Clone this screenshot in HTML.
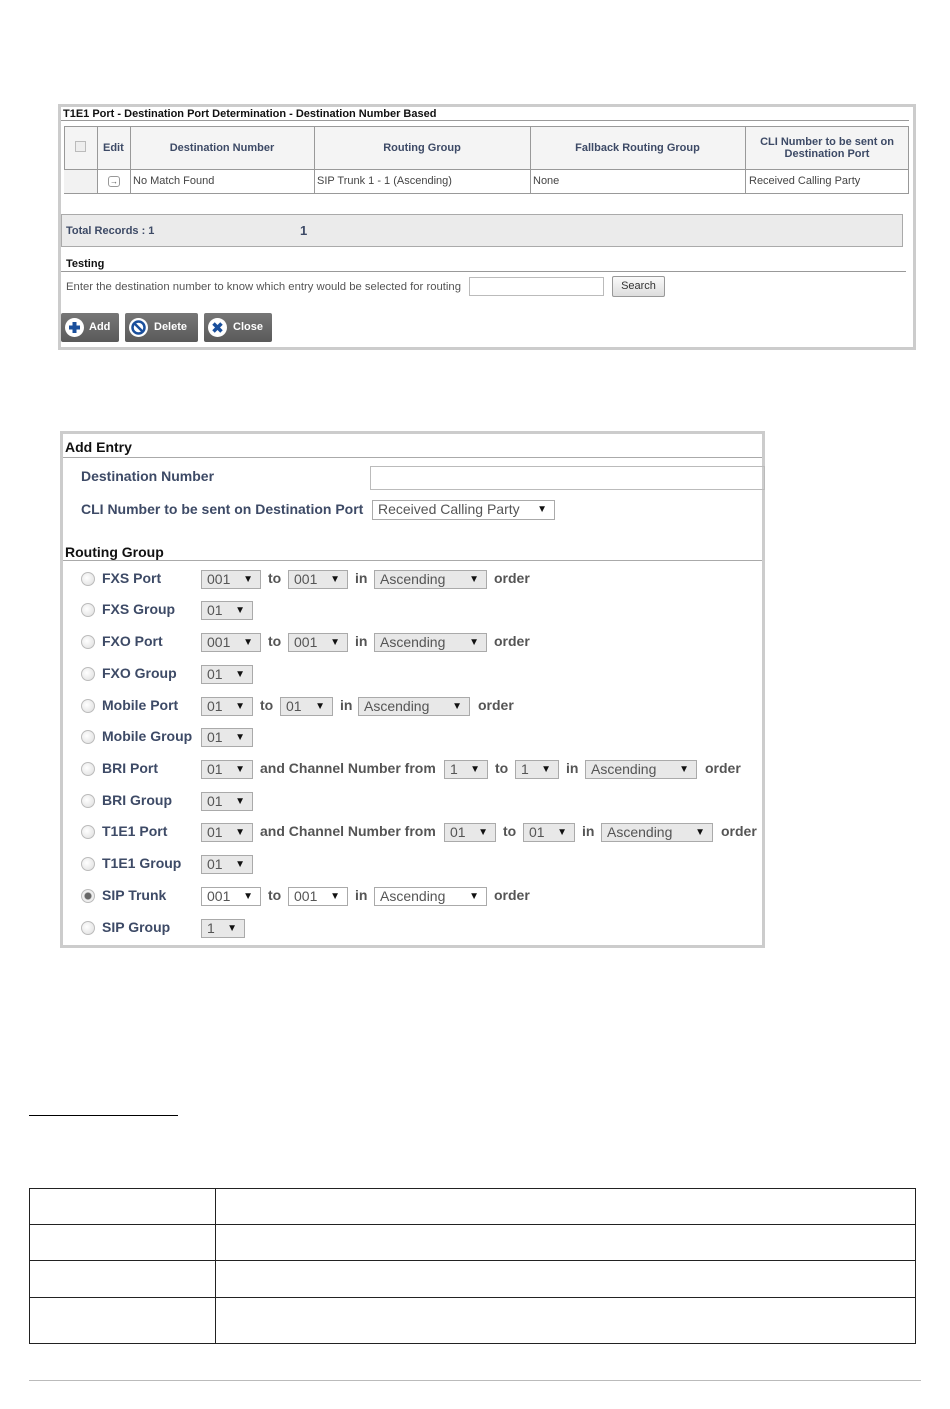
<!DOCTYPE html>
<html><head><meta charset="utf-8"><style>
*{margin:0;padding:0;box-sizing:border-box}
body{width:950px;height:1409px;background:#fff;position:relative;font-family:"Liberation Sans",Arial,sans-serif;overflow:hidden}
.a{position:absolute}
.t{position:absolute;white-space:nowrap}
.s{position:absolute;height:19px;border:1px solid #aaa;background:#e8e8e8;font-size:14px;color:#555;padding-left:5px;line-height:17px}
.s:after{content:"▼";position:absolute;right:7px;top:0;font-size:10px;color:#111}
.s.w{background:#fff}
.r{position:absolute;width:14px;height:14px;border-radius:50%;border:1px solid #bbb;background:radial-gradient(circle at 40% 40%,#fff,#ddd)}
.l{position:absolute;font-size:14px;color:#3d4a66;white-space:nowrap;font-weight:bold}
.k{position:absolute;font-size:14px;color:#555;white-space:nowrap;font-weight:bold}
.btn{position:absolute;top:313px;height:29px;background:linear-gradient(#777,#5a5a5a);color:#fff;font-size:11px;line-height:29px;border-radius:2px;font-weight:bold}
.ic{position:absolute;left:4px;top:5px;width:19px;height:19px;border-radius:50%;background:#fff}
.h{font-weight:bold}
</style></head><body>
<!-- panel 1 -->
<div class="a" style="left:58px;top:104px;width:858px;height:246px;border:3px solid #ccc"></div>
<div class="t h" style="left:63px;top:108px;font-size:11px;color:#111">T1E1 Port - Destination Port Determination - Destination Number Based</div>
<div class="a" style="left:61px;top:120px;width:848px;border-top:1px solid #999"></div>
<div class="a" style="left:64px;top:126px;width:845px;height:68px;border:1px solid #999;background:#fff"></div>
<div class="a" style="left:64px;top:126px;width:845px;height:44px;background:#f4f4f4;border:1px solid #999"></div>
<div class="a" style="left:64px;top:170px;width:33px;height:23px;background:#f2f2f2"></div>
<div class="a" style="left:97px;top:126px;height:68px;border-left:1px solid #999"></div>
<div class="a" style="left:130px;top:126px;height:68px;border-left:1px solid #999"></div>
<div class="a" style="left:314px;top:126px;height:68px;border-left:1px solid #999"></div>
<div class="a" style="left:530px;top:126px;height:68px;border-left:1px solid #999"></div>
<div class="a" style="left:745px;top:126px;height:68px;border-left:1px solid #999"></div>
<div class="a" style="left:75px;top:141px;width:11px;height:11px;border:1px solid #bbb;background:#eee"></div>
<div class="t h" style="left:103px;top:142px;font-size:11px;color:#3d4a66">Edit</div>
<div class="t h" style="left:130px;width:184px;text-align:center;top:142px;font-size:11px;color:#3d4a66">Destination Number</div>
<div class="t h" style="left:314px;width:216px;text-align:center;top:142px;font-size:11px;color:#3d4a66">Routing Group</div>
<div class="t h" style="left:530px;width:215px;text-align:center;top:142px;font-size:11px;color:#3d4a66">Fallback Routing Group</div>
<div class="t h" style="left:745px;width:164px;text-align:center;top:136px;font-size:11px;color:#3d4a66;line-height:12px;white-space:normal">CLI Number to be sent on Destination Port</div>
<div class="a" style="left:108px;top:176px;width:12px;height:11px;border:1px solid #999;border-radius:3px;font-size:8px;line-height:9px;text-align:center;color:#555">→</div>
<div class="t" style="left:133px;top:175px;font-size:11px;color:#444">No Match Found</div>
<div class="t" style="left:317px;top:175px;font-size:11px;color:#444">SIP Trunk 1 - 1 (Ascending)</div>
<div class="t" style="left:533px;top:175px;font-size:11px;color:#444">None</div>
<div class="t" style="left:749px;top:175px;font-size:11px;color:#444">Received Calling Party</div>
<div class="a" style="left:61px;top:214px;width:842px;height:33px;background:#ebebeb;border:1px solid #aaa"></div>
<div class="t h" style="left:66px;top:225px;font-size:11px;color:#3d4a66">Total Records : 1</div>
<div class="t h" style="left:300px;top:223px;font-size:13px;color:#3d4a66">1</div>
<div class="t h" style="left:66px;top:258px;font-size:11px;color:#111">Testing</div>
<div class="a" style="left:61px;top:271px;width:845px;border-top:1px solid #999"></div>
<div class="t" style="left:66px;top:281px;font-size:11.3px;color:#555">Enter the destination number to know which entry would be selected for routing</div>
<div class="a" style="left:469px;top:277px;width:135px;height:19px;border:1px solid #bbb"></div>
<div class="a" style="left:612px;top:276px;width:53px;height:21px;border:1px solid #999;background:linear-gradient(#fafafa,#ddd);font-size:11px;line-height:19px;text-align:center;color:#333;border-radius:2px">Search</div>
<div class="btn" style="left:61px;width:58px"><div class="ic"><svg width="19" height="19"><path d="M9.5 4v11M4 9.5h11" stroke="#1a4f9c" stroke-width="4"/></svg></div><span style="margin-left:28px">Add</span></div>
<div class="btn" style="left:125px;width:73px"><div class="ic"><svg width="19" height="19"><circle cx="9.5" cy="9.5" r="6" fill="none" stroke="#1a4f9c" stroke-width="2.5"/><path d="M5.5 5.5l8 8" stroke="#1a4f9c" stroke-width="2.5"/></svg></div><span style="margin-left:29px">Delete</span></div>
<div class="btn" style="left:204px;width:68px"><div class="ic"><svg width="19" height="19"><path d="M5.5 5.5l8 8M13.5 5.5l-8 8" stroke="#1a4f9c" stroke-width="3.5"/></svg></div><span style="margin-left:29px">Close</span></div>

<!-- panel 2 -->
<div class="a" style="left:60px;top:431px;width:705px;height:517px;border:3px solid #ccc"></div>
<div class="t h" style="left:65px;top:439px;font-size:14px;color:#111">Add Entry</div>
<div class="a" style="left:63px;top:457px;width:699px;border-top:1px solid #aaa"></div>
<div class="l" style="left:81px;top:468px">Destination Number</div>
<div class="a" style="left:370px;top:466px;width:395px;height:24px;border:1px solid #bbb"></div>
<div class="l" style="left:81px;top:501px">CLI Number to be sent on Destination Port</div>
<div class="s w" style="left:372px;top:500px;width:183px;height:20px">Received Calling Party</div>
<div class="t h" style="left:65px;top:544px;font-size:14px;color:#111">Routing Group</div>
<div class="a" style="left:63px;top:560px;width:699px;border-top:1px solid #aaa"></div>

<div class="r" style="left:81px;top:572px"></div><div class="l" style="left:102px;top:570px">FXS Port</div>
<div class="s" style="left:201px;top:570px;width:60px">001</div><div class="k" style="left:268px;top:570px">to</div>
<div class="s" style="left:288px;top:570px;width:60px">001</div><div class="k" style="left:355px;top:570px">in</div>
<div class="s" style="left:374px;top:570px;width:113px">Ascending</div><div class="k" style="left:494px;top:570px">order</div>

<div class="r" style="left:81px;top:603px"></div><div class="l" style="left:102px;top:601px">FXS Group</div>
<div class="s" style="left:201px;top:601px;width:52px">01</div>

<div class="r" style="left:81px;top:635px"></div><div class="l" style="left:102px;top:633px">FXO Port</div>
<div class="s" style="left:201px;top:633px;width:60px">001</div><div class="k" style="left:268px;top:633px">to</div>
<div class="s" style="left:288px;top:633px;width:60px">001</div><div class="k" style="left:355px;top:633px">in</div>
<div class="s" style="left:374px;top:633px;width:113px">Ascending</div><div class="k" style="left:494px;top:633px">order</div>

<div class="r" style="left:81px;top:667px"></div><div class="l" style="left:102px;top:665px">FXO Group</div>
<div class="s" style="left:201px;top:665px;width:52px">01</div>

<div class="r" style="left:81px;top:699px"></div><div class="l" style="left:102px;top:697px">Mobile Port</div>
<div class="s" style="left:201px;top:697px;width:52px">01</div><div class="k" style="left:260px;top:697px">to</div>
<div class="s" style="left:280px;top:697px;width:53px">01</div><div class="k" style="left:340px;top:697px">in</div>
<div class="s" style="left:358px;top:697px;width:112px">Ascending</div><div class="k" style="left:478px;top:697px">order</div>

<div class="r" style="left:81px;top:730px"></div><div class="l" style="left:102px;top:728px">Mobile Group</div>
<div class="s" style="left:201px;top:728px;width:52px">01</div>

<div class="r" style="left:81px;top:762px"></div><div class="l" style="left:102px;top:760px">BRI Port</div>
<div class="s" style="left:201px;top:760px;width:52px">01</div><div class="k" style="left:260px;top:760px">and Channel Number from</div>
<div class="s" style="left:444px;top:760px;width:44px">1</div><div class="k" style="left:495px;top:760px">to</div>
<div class="s" style="left:515px;top:760px;width:44px">1</div><div class="k" style="left:566px;top:760px">in</div>
<div class="s" style="left:585px;top:760px;width:112px">Ascending</div><div class="k" style="left:705px;top:760px">order</div>

<div class="r" style="left:81px;top:794px"></div><div class="l" style="left:102px;top:792px">BRI Group</div>
<div class="s" style="left:201px;top:792px;width:52px">01</div>

<div class="r" style="left:81px;top:825px"></div><div class="l" style="left:102px;top:823px">T1E1 Port</div>
<div class="s" style="left:201px;top:823px;width:52px">01</div><div class="k" style="left:260px;top:823px">and Channel Number from</div>
<div class="s" style="left:444px;top:823px;width:52px">01</div><div class="k" style="left:503px;top:823px">to</div>
<div class="s" style="left:523px;top:823px;width:52px">01</div><div class="k" style="left:582px;top:823px">in</div>
<div class="s" style="left:601px;top:823px;width:112px">Ascending</div><div class="k" style="left:721px;top:823px">order</div>

<div class="r" style="left:81px;top:857px"></div><div class="l" style="left:102px;top:855px">T1E1 Group</div>
<div class="s" style="left:201px;top:855px;width:52px">01</div>

<div class="r" style="left:81px;top:889px;background:radial-gradient(circle,#666 0 3px,#eee 4px)"></div><div class="l" style="left:102px;top:887px">SIP Trunk</div>
<div class="s w" style="left:201px;top:887px;width:60px">001</div><div class="k" style="left:268px;top:887px">to</div>
<div class="s w" style="left:288px;top:887px;width:60px">001</div><div class="k" style="left:355px;top:887px">in</div>
<div class="s w" style="left:374px;top:887px;width:113px">Ascending</div><div class="k" style="left:494px;top:887px">order</div>

<div class="r" style="left:81px;top:921px"></div><div class="l" style="left:102px;top:919px">SIP Group</div>
<div class="s" style="left:201px;top:919px;width:44px">1</div>

<!-- bottom -->
<div class="a" style="left:29px;top:1115px;width:149px;border-top:1px solid #000"></div>
<div class="a" style="left:29px;top:1188px;width:887px;height:156px;border:1px solid #222"></div>
<div class="a" style="left:29px;top:1224px;width:887px;border-top:1px solid #222"></div>
<div class="a" style="left:29px;top:1260px;width:887px;border-top:1px solid #222"></div>
<div class="a" style="left:29px;top:1297px;width:887px;border-top:1px solid #222"></div>
<div class="a" style="left:215px;top:1188px;height:156px;border-left:1px solid #222"></div>
<div class="a" style="left:29px;top:1380px;width:892px;border-top:1px solid #bbb"></div>
</body></html>
